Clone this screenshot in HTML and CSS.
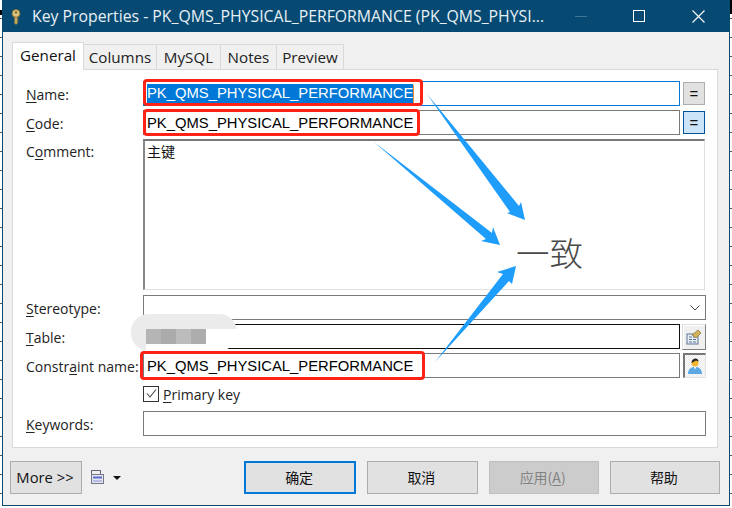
FILE: index.html
```html
<!DOCTYPE html>
<html lang="en">
<head>
<meta charset="utf-8">
<title>Key Properties</title>
<link rel="stylesheet" href="styles.css">
</head>
<body>
<div class="window">
  <header class="titlebar">
    <svg class="key-icon" viewBox="0 0 12 16" width="12" height="16">
      <circle cx="6" cy="4.500" r="4" fill="#dcc27a" stroke="#7d6a3a" stroke-width="1"/>
      <circle cx="6" cy="3.500" r="1" fill="#4e4426"/>
      <path d="M4.500 8h3v6.500l-1.500 1-1.500-1z" fill="#c4a85e" stroke="#7d6a3a" stroke-width=".6"/>
      <path d="M7.500 10.500h1.500M7.500 12.500h1" stroke="#7d6a3a" stroke-width="1"/>
    </svg>
    <span class="title-text">Key Properties - PK_QMS_PHYSICAL_PERFORMANCE (PK_QMS_PHYSI...</span>
    <div class="controls">
      <span class="ctl ctl-min"></span>
      <span class="ctl ctl-max"></span>
      <svg class="ctl-close" viewBox="0 0 13 13" width="13" height="13"><path d="M.5.5l12 12M12.500.5l-12 12" stroke="#fff" stroke-width="1.100" fill="none"/></svg>
    </div>
  </header>
  <div class="content">
    <nav class="tabs">
      <span class="tab tab-active">General</span>
      <span class="tab tab-columns">Columns</span>
      <span class="tab tab-mysql">MySQL</span>
      <span class="tab tab-notes">Notes</span>
      <span class="tab tab-preview">Preview</span>
    </nav>
    <section class="panel">
      <label class="lbl"><u>N</u>ame:</label>
      <div class="field field-focus"><span class="selected">PK_QMS_PHYSICAL_PERFORMANCE</span><span class="caret"></span></div>
      <button class="eq">=</button>

      <label class="lbl"><u>C</u>ode:</label>
      <div class="field">PK_QMS_PHYSICAL_PERFORMANCE</div>
      <button class="eq eq-on">=</button>

      <label class="lbl lbl-top">C<u>o</u>mment:</label>
      <div class="memo">主键</div>

      <label class="lbl"><u>S</u>tereotype:</label>
      <div class="field field-wide field-stereo">
        <svg class="chev" viewBox="0 0 10 6" width="10" height="6"><path d="M.5.5L5 5 9.500.5" stroke="#444" fill="none"/></svg>
      </div>

      <label class="lbl"><u>T</u>able:</label>
      <div class="field field-black"></div>
      <button class="icon-btn">
        <svg viewBox="0 0 16 16" width="16" height="16">
          <rect x="1" y="5" width="11" height="10" fill="#e8eef6" stroke="#5c7696"/>
          <path d="M3 8h3M7 8h3M3 10.500h3M7 10.500h3M3 13h3M7 13h3" stroke="#5c7696"/>
          <path d="M6 6l6-5 3 3-5 5z" fill="#d4b25c" stroke="#8a7336" stroke-width=".7"/>
        </svg>
      </button>

      <label class="lbl">Constr<u>a</u>int name:</label>
      <div class="field field-low">PK_QMS_PHYSICAL_PERFORMANCE</div>
      <button class="icon-btn icon-btn-on">
        <svg viewBox="0 0 16 16" width="16" height="16">
          <path d="M1 16c0-5 3-6 5-7h4c2 1 5 2 5 7z" fill="#5aa9e6"/>
          <path d="M7 9l1 3 1-3z" fill="#fff"/>
          <circle cx="8" cy="5" r="3.500" fill="#f2b632"/>
          <path d="M4.500 5c0-3 2-4.500 4-4.500s3 1.500 3 3L9 2.500z" fill="#222"/>
        </svg>
      </button>

      <span></span>
      <div class="check-row">
        <span class="checkbox">
          <svg viewBox="0 0 13 13" width="13" height="13"><path d="M2 6.500l3 3.500 6-7.500" stroke="#444" stroke-width="1.100" fill="none"/></svg>
        </span>
        <span class="check-label"><u>P</u>rimary key</span>
      </div>

      <label class="lbl"><u>K</u>eywords:</label>
      <div class="field field-wide"></div>
    </section>
    <footer class="footer">
      <button class="btn btn-more">More &gt;&gt;</button>
      <svg class="doc-icon" viewBox="0 0 15 16" width="15" height="16">
        <rect x="1.500" y="1.500" width="9" height="4" fill="#eee" stroke="#667"/>
        <rect x="1.500" y="5.500" width="12" height="9" fill="#e4e6ee" stroke="#778"/>
        <path d="M3 8.500h9" stroke="#5c6ad0" stroke-width="2"/>
        <path d="M3 12h9" stroke="#8a93d8" stroke-width="1"/>
      </svg>
      <span class="drop-caret"></span>
      <div class="actions">
        <button class="btn btn-default">确定</button>
        <button class="btn">取消</button>
        <button class="btn btn-disabled">应用(<u>A</u>)</button>
        <button class="btn">帮助</button>
      </div>
    </footer>
  </div>
</div>

<div class="blur-blob">
  <span class="px px1"></span><span class="px px2"></span><span class="px px3"></span><span class="px px4"></span>
</div>
<span class="mark mark-name"></span>
<span class="mark mark-code"></span>
<span class="mark mark-constraint"></span>
<svg class="arrows" viewBox="0 0 732 508" width="732" height="508">
  <polygon points="427,94 519,206 521,202 525,220 507,213 510,212"/>
  <polygon points="374,142 492,233 493,227 500,245 481,241 486,239"/>
  <polygon points="435,362 503,274 497,272 516,266 512,284 509,281"/>
</svg>
<span class="note">一致</span>
</body>
</html>
```
FILE: styles.css
```css
* { box-sizing: border-box; }
html, body { margin: 0; padding: 0; }
body {
  width: 732px;
  height: 508px;
  overflow: hidden;
  position: relative;
  background-color: #fff;
  background-image:
    linear-gradient(#000, #000),
    linear-gradient(#000, #000),
    repeating-linear-gradient(to bottom, transparent 0 18px, #555 18px 19px);
  background-repeat: no-repeat;
  background-size: 2px 5px, 2px 14px, 100% 100%;
  background-position: 0 10px, 100% 0, 0 0;
  font-family: "Open Sans", "Noto Sans CJK SC", sans-serif;
  font-size: 14px;
  color: #111;
}
.window {
  margin-left: 2px;
  width: 728px;
  height: 506px;
  background: #f0f0f0;
  border: solid #0a4a73;
  border-width: 0 1px 1px 1px;
  display: flex;
  flex-direction: column;
}
.titlebar {
  height: 32px;
  flex: none;
  margin: 0 -1px;
  background: #064a73;
  color: #e8f0f5;
  display: flex;
  align-items: center;
  padding-left: 8px;
  font-size: 15.800px;
}
.key-icon { flex: none; margin-top: 1px; }
.title-text { margin-left: 10px; white-space: nowrap; }
.controls { margin-left: auto; display: flex; align-items: center; padding-right: 25px; }
.ctl-min { width: 12px; height: 1px; background: #3d7596; margin-right: 46px; }
.ctl-max { width: 12px; height: 12px; border: 1px solid #fff; margin-right: 47px; }
.ctl-close { display: block; }
.content { flex: 1; display: flex; flex-direction: column; padding: 10px 9px 0 9px; }
.tabs { display: flex; align-items: flex-end; height: 28px; position: relative; z-index: 1; margin-bottom: -1px; }
.tab {
  height: 26px;
  border: 1px solid #d9d9d9;
  border-left: 0;
  background: #f0f0f0;
  display: flex;
  align-items: center;
  justify-content: center;
  font-size: 15.200px;
  color: #222;
}
.tab-active { width: 72px; height: 28px; background: #fff; border-left: 1px solid #d9d9d9; border-bottom: 0; color: #111; padding-bottom: 3px; }
.tab-columns { width: 73px; }
.tab-mysql { width: 64px; }
.tab-notes { width: 56px; }
.tab-preview { width: 67px; }
.panel {
  width: 706px;
  height: 379px;
  flex: none;
  background: #fff;
  border: 1px solid #d9d9d9;
  padding: 11px 11px 11px 13px;
  display: grid;
  grid-template-columns: 117px 537px 26px;
  grid-template-rows: 25px 25px 152px 25px 25px 25px 25px 25px;
  row-gap: 4px;
  align-items: stretch;
}
.lbl { display: flex; align-items: center; padding-top: 2px; font-size: 14px; color: #222; white-space: pre; }
.lbl-top { align-items: flex-start; padding-top: 3px; }
u { text-underline-offset: 2px; }
.field {
  border: 1px solid #7a7a7a;
  background: #fff;
  font-family: "Liberation Sans", sans-serif;
  font-size: 14.800px;
  color: #000;
  padding: 0 0 0 3px;
  display: flex;
  align-items: center;
  white-space: nowrap;
}
.field-low { padding-top: 1px; }
.field-focus { border-color: #0078d7; }
.field-black { border-color: #111; }
.field-wide { grid-column: 2 / span 2; }
.field-stereo { justify-content: flex-end; padding-right: 5px; }
.selected { background: #0078d7; color: #fff; padding: 1px 0 2px; }
.caret { width: 1px; height: 18px; background: #f09030; }
.memo {
  grid-column: 2 / span 2;
  margin-right: 1px;
  height: 151px;
  border: 1px solid #e0e0e0;
  border-top: 2px solid #777;
  border-left: 2px solid #888;
  background: #fff;
  padding: 0 0 0 2px;
  font-family: "Noto Sans CJK SC", sans-serif;
  font-size: 14px;
  line-height: 20px;
}
.eq {
  justify-self: end;
  width: 22px;
  height: 23px;
  margin-top: 1px;
  padding: 0;
  margin-right: 1px;
  border: 1px solid #adadad;
  background: #e1e1e1;
  font-family: "Liberation Sans", sans-serif;
  font-size: 15px;
  color: #111;
}
.eq-on { border-color: #005499; background: #cce4f7; }
.icon-btn {
  justify-self: end;
  width: 24px;
  height: 26px;
  padding: 0;
  background: #f0f0f0;
  border: 1px solid;
  border-color: #e0e0e0 #808080 #808080 #e0e0e0;
  box-shadow: inset 1px 1px 0 #fff;
  display: flex;
  align-items: center;
  justify-content: center;
}
.icon-btn-on {
  width: 23px;
  height: 25px;
  border-width: 2px 1px 1px 2px;
  border-color: #777 #e0e0e0 #e0e0e0 #777;
  box-shadow: none;
  background: conic-gradient(#e8e8e8 25%, #fff 0 50%, #e8e8e8 0 75%, #fff 0) 0 0 / 2px 2px;
}
.check-row { grid-column: 2 / span 2; display: flex; align-items: center; padding-bottom: 2px; }
.checkbox {
  width: 16px;
  height: 16px;
  border: 1px solid #333;
  background: #fff;
  display: flex;
  align-items: center;
  justify-content: center;
}
.check-label { margin-left: 4px; padding-top: 1px; font-size: 14px; color: #222; }
.footer { display: flex; align-items: flex-start; margin-left: -2px; padding-top: 13px; }
.btn {
  width: 111px;
  height: 33px;
  padding: 0 2px 2px 0;
  border: 1px solid #adadad;
  background: #e1e1e1;
  font-family: "Noto Sans CJK SC", sans-serif;
  font-size: 14px;
  color: #111;
}
.btn-more { width: 72px; font-family: "Open Sans", sans-serif; font-size: 14.800px; }
.btn-default { border: 2px solid #0078d7; }
.btn-disabled { background: #ccc; border-color: #bfbfbf; color: #838383; }
.doc-icon { margin: 8px 0 0 8px; flex: none; }
.drop-caret {
  margin: 15px 0 0 8px;
  width: 0;
  height: 0;
  border: solid transparent;
  border-width: 4px 4px 0;
  border-top-color: #111;
}
.actions { margin-left: auto; width: 476px; display: flex; gap: 11px; }
.actions .btn { flex: 1; width: auto; }

/* Annotations painted over the screenshot */
.mark { position: absolute; border: 3px solid #ff2317; border-radius: 4px; }
.mark-name { left: 143px; top: 79px; width: 280px; height: 27px; }
.mark-code { left: 143px; top: 109px; width: 277px; height: 27px; }
.mark-constraint { left: 140px; top: 351px; width: 285px; height: 29px; }
.arrows { position: absolute; left: 0; top: 0; pointer-events: none; }
.arrows polygon { fill: #1e9dfb; }
.note {
  position: absolute;
  left: 516px;
  top: 228px;
  font-family: "Noto Sans CJK SC", sans-serif;
  font-size: 33.500px;
  font-weight: 300;
  line-height: 48px;
  color: #484848;
}
.blur-blob {
  position: absolute;
  left: 131px;
  top: 314px;
  width: 106px;
  height: 37px;
  border-radius: 18px;
  background:
    linear-gradient(#ebebeb 0 15px, transparent 15px),
    linear-gradient(to right, #ebebeb 0 15px, #fff 15px);
  display: flex;
  padding: 15px 0 0 15px;
}
.px { width: 15px; height: 15px; }
.px1 { background: #b5b5b5; }
.px2 { background: #ababab; }
.px3 { background: #bcbcbc; }
.px4 { background: #adadad; }
```
